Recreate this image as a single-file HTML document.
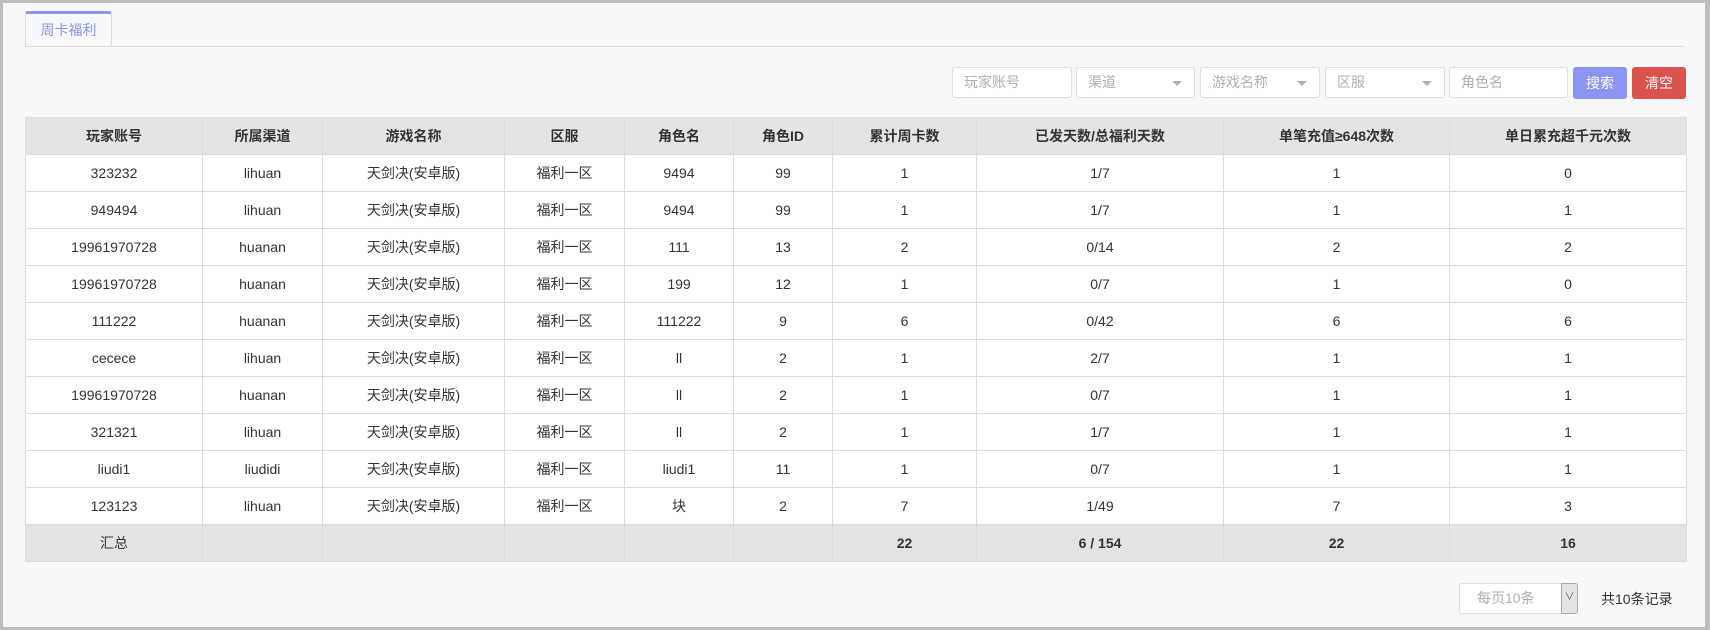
<!DOCTYPE html>
<html><head><meta charset="utf-8"><style>
*{box-sizing:border-box;margin:0;padding:0}
body{width:1710px;height:630px;background:#bdbdbd;font-family:"Liberation Sans","Noto Sans CJK SC",sans-serif;font-size:14px;color:#333;position:relative;overflow:hidden}
.frame{position:absolute;left:3px;top:3px;width:1702px;height:624px;background:#f7f8fa}
.abs{position:absolute}
.tab{left:22px;top:8px;width:87px;height:36px;border:1px solid #ddd;border-bottom:none;border-top:3px solid #8c95f0;border-radius:3px 3px 0 0;background:#f7f8fa;color:#8c95f0;font-size:14px;text-align:center;line-height:32px}
.line{left:22px;top:43px;width:1660px;height:1px;background:#ddd}
.inp{top:64px;height:31px;border:1px solid #dcdfe6;border-radius:3px;background:#fff;color:#aab0b8;font-size:14px;line-height:29px;padding-left:11px}
.inp .car{position:absolute;right:12px;top:13px;border-left:5px solid transparent;border-right:5px solid transparent;border-top:5px solid #aab0b8}
.btn{top:64px;height:32px;border-radius:3px;color:#fff;text-align:center;line-height:32px;font-size:14px}
table{position:absolute;left:22px;top:114px;border-collapse:collapse;table-layout:fixed;width:1661px}
td,th{border:1px solid #dcdcdc;height:37px;text-align:center;font-size:14px;color:#333}
th{background:#e4e4e4;font-weight:bold}
td{background:#fff}
tr.sum td{background:#e4e4e4;font-weight:bold}
tr.sum td:first-child{font-weight:normal}
</style></head><body>
<div class="frame">
<div class="abs tab">周卡福利</div>
<div class="abs line"></div>
<div class="abs inp" style="left:949px;width:120px">玩家账号</div>
<div class="abs inp" style="left:1073px;width:119px">渠道<span class="car"></span></div>
<div class="abs inp" style="left:1197px;width:120px">游戏名称<span class="car"></span></div>
<div class="abs inp" style="left:1322px;width:120px">区服<span class="car"></span></div>
<div class="abs inp" style="left:1446px;width:119px">角色名</div>
<div class="abs btn" style="left:1570px;width:54px;background:#8c95f0">搜索</div>
<div class="abs btn" style="left:1629px;width:54px;background:#d9534f">清空</div>
<table>
<colgroup><col style="width:177px"><col style="width:120px"><col style="width:182px"><col style="width:120px"><col style="width:109px"><col style="width:99px"><col style="width:144px"><col style="width:247px"><col style="width:226px"><col style="width:237px"></colgroup>
<tr><th>玩家账号</th><th>所属渠道</th><th>游戏名称</th><th>区服</th><th>角色名</th><th>角色ID</th><th>累计周卡数</th><th>已发天数/总福利天数</th><th>单笔充值≥648次数</th><th>单日累充超千元次数</th></tr>
<tr><td>323232</td><td>lihuan</td><td>天剑决(安卓版)</td><td>福利一区</td><td>9494</td><td>99</td><td>1</td><td>1/7</td><td>1</td><td>0</td></tr>
<tr><td>949494</td><td>lihuan</td><td>天剑决(安卓版)</td><td>福利一区</td><td>9494</td><td>99</td><td>1</td><td>1/7</td><td>1</td><td>1</td></tr>
<tr><td>19961970728</td><td>huanan</td><td>天剑决(安卓版)</td><td>福利一区</td><td>111</td><td>13</td><td>2</td><td>0/14</td><td>2</td><td>2</td></tr>
<tr><td>19961970728</td><td>huanan</td><td>天剑决(安卓版)</td><td>福利一区</td><td>199</td><td>12</td><td>1</td><td>0/7</td><td>1</td><td>0</td></tr>
<tr><td>111222</td><td>huanan</td><td>天剑决(安卓版)</td><td>福利一区</td><td>111222</td><td>9</td><td>6</td><td>0/42</td><td>6</td><td>6</td></tr>
<tr><td>cecece</td><td>lihuan</td><td>天剑决(安卓版)</td><td>福利一区</td><td>ll</td><td>2</td><td>1</td><td>2/7</td><td>1</td><td>1</td></tr>
<tr><td>19961970728</td><td>huanan</td><td>天剑决(安卓版)</td><td>福利一区</td><td>ll</td><td>2</td><td>1</td><td>0/7</td><td>1</td><td>1</td></tr>
<tr><td>321321</td><td>lihuan</td><td>天剑决(安卓版)</td><td>福利一区</td><td>ll</td><td>2</td><td>1</td><td>1/7</td><td>1</td><td>1</td></tr>
<tr><td>liudi1</td><td>liudidi</td><td>天剑决(安卓版)</td><td>福利一区</td><td>liudi1</td><td>11</td><td>1</td><td>0/7</td><td>1</td><td>1</td></tr>
<tr><td>123123</td><td>lihuan</td><td>天剑决(安卓版)</td><td>福利一区</td><td>块</td><td>2</td><td>7</td><td>1/49</td><td>7</td><td>3</td></tr>
<tr class="sum"><td>汇总</td><td></td><td></td><td></td><td></td><td></td><td>22</td><td>6 / 154</td><td>22</td><td>16</td></tr>
</table>
<div class="abs" style="left:1456px;top:580px;width:119px;height:31px;border:1px solid #dcdfe6;border-radius:3px;background:#fff;color:#aab0b8;line-height:29px;padding-left:17px">每页10条<div class="abs" style="right:-1px;top:-1px;width:17px;height:31px;background:#e4e4e4;border:1px solid #aaa;border-radius:0 3px 3px 0;font-size:10px;line-height:27px;text-align:center;color:#555">&#8744;</div></div>
<div class="abs" style="left:1598px;top:587px;line-height:18px;color:#333">共10条记录</div>
</div>
</body></html>
